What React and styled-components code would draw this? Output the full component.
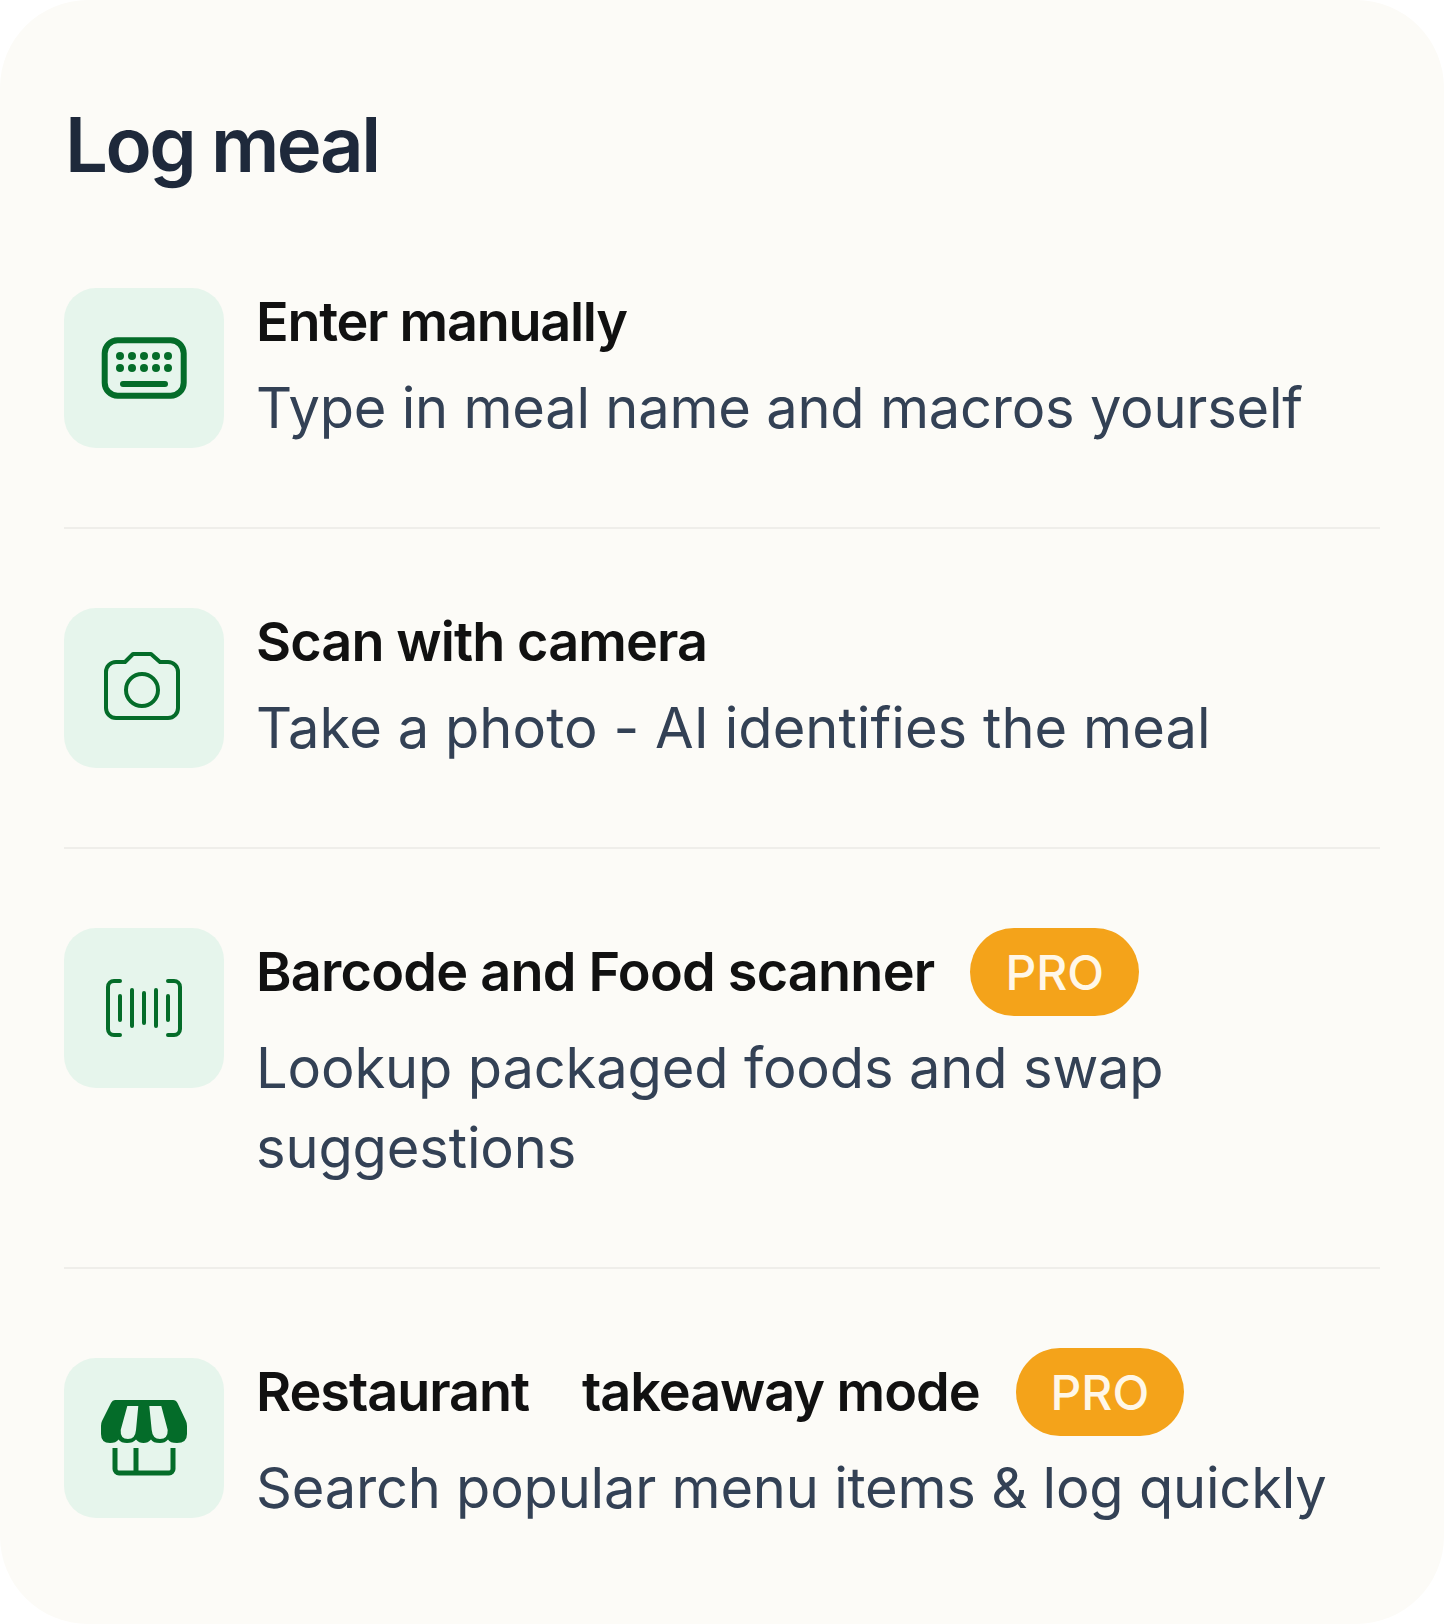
import styled, { createGlobalStyle } from 'styled-components'

const GlobalStyle = createGlobalStyle`
    html, body {
        margin: 0;
        padding: 0;
        background: #ffffff;
    }
    * {
        box-sizing: border-box;
    }
`

const KeyboardIcon = () => (
    <svg viewBox="0 0 96 96" width="96" height="96" fill="none" stroke="#046c29" strokeWidth="6" strokeLinecap="round">
        <rect x="8.7" y="20.3" width="79" height="55.4" rx="13" />
        {[24, 36, 48, 60, 72].map((x) => (
            <g key={x} fill="#046c29" stroke="none">
                <circle cx={x} cy="36" r="4" />
                <circle cx={x} cy="48" r="4" />
            </g>
        ))}
        <path d="M27 64H69" />
    </svg>
)

const CameraIcon = () => (
    <svg viewBox="0 0 96 96" width="96" height="96" fill="none" stroke="#046c29" strokeWidth="4" strokeLinejoin="round">
        <path d="M10 32a10 10 0 0 1 10-10H29L37 14H55L64 22H72a10 10 0 0 1 10 10V68a10 10 0 0 1-10 10H20a10 10 0 0 1-10-10Z" />
        <circle cx="46" cy="50" r="16" />
    </svg>
)

const BarcodeIcon = () => (
    <svg viewBox="0 0 96 96" width="96" height="96" fill="none" stroke="#046c29" strokeWidth="4" strokeLinecap="round">
        <path d="M24 21H18a6 6 0 0 0-6 6V69a6 6 0 0 0 6 6H24" />
        <path d="M72 21H78a6 6 0 0 1 6 6V69a6 6 0 0 1-6 6H72" />
        <path d="M24 36V60M36 30V66M48 33V63M60 30V66M72 36V60" />
    </svg>
)

const StoreIcon = () => (
    <svg viewBox="0 0 96 96" width="96" height="96" fill="none">
        <path
            fill="#046c29"
            fillRule="evenodd"
            d="M19 10H77Q80 10 81.500 13L90 31Q91 33 91 36V44Q91 53 81 53Q74 53 72 49.500Q69 53 64 53Q57 53 55 49.500Q52 53 47.500 53Q43 53 40 49.500Q37 53 31 53Q25 53 22.500 49.500Q20 53 14 53Q5 53 5 44V36Q5 33 6 31L15 13Q16.500 10 19 10ZM31.300 16H42.300L40 40Q39.300 49 32 49Q24 49 24.700 40ZM53.300 16H65.300L71.700 40Q72 49 64 49Q56.500 49 55.700 40Z"
        />
        <path stroke="#046c29" strokeWidth="5" d="M19 58V79a4 4 0 0 0 4 4H73a4 4 0 0 0 4-4V58M40 58V83" />
    </svg>
)

const items = [
    { title: 'Enter manually', titleTracking: -1.27, text: 'Type in meal name and macros yourself', icon: <KeyboardIcon />, tracking: -0.22 },
    { title: 'Scan with camera', titleTracking: -0.9, text: 'Take a photo - AI identifies the meal', icon: <CameraIcon />, tracking: 0.06 },
    { title: 'Barcode and Food scanner', titleTracking: -0.77, text: 'Lookup packaged foods and swap suggestions', icon: <BarcodeIcon />, tracking: -0.14, pro: true, top: true },
    { title: 'Restaurant\u2003takeaway mode', titleTracking: -1.05, text: 'Search popular menu items & log quickly', icon: <StoreIcon />, tracking: -0.21, pro: true },
]

const App = () => {

    return (
        <>
            <GlobalStyle />
            <Card>
                <Heading>Log meal</Heading>
                <List>
                    {items.map((item, i) => (
                        <Row key={item.title} $top={item.top} $last={i === items.length - 1}>
                            <IconBox>{item.icon}</IconBox>
                            <Body>
                                <TitleRow $pro={item.pro}>
                                    <Title $tracking={item.titleTracking}>{item.title}</Title>
                                    {item.pro && <Badge>PRO</Badge>}
                                </TitleRow>
                                <Description $tracking={item.tracking}>{item.text}</Description>
                            </Body>
                        </Row>
                    ))}
                </List>
            </Card>
        </>
    )

}

const Card = styled.div`
    width: 1444px;
    height: 1624px;
    padding: 0 64px;
    background: #fcfbf7;
    border-radius: 88px;
    font-family: 'Inter', 'Liberation Sans', sans-serif;
    overflow: hidden;
`

const Heading = styled.h1`
    margin: 0;
    padding: 94px 0 0 1px;
    height: 288px;
    font-size: 76px;
    line-height: 100px;
    font-weight: 600;
    letter-spacing: -2.5px;
    color: #1e293b;
`

const List = styled.div`
    display: flex;
    flex-direction: column;
`

const Row = styled.div`
    display: flex;
    align-items: ${(p) => (p.$top ? 'flex-start' : 'center')};
    gap: 32px;
    padding-bottom: ${(p) => (p.$last ? '0' : '79px')};
    margin-bottom: ${(p) => (p.$last ? '0' : '79px')};
    border-bottom: ${(p) => (p.$last ? 'none' : '2px solid #efeeea')};
`

const IconBox = styled.div`
    flex: none;
    width: 160px;
    height: 160px;
    display: flex;
    align-items: center;
    justify-content: center;
    background: #e6f5ec;
    border-radius: 32px;
`

const Body = styled.div`
    flex: 1;
    min-width: 0;
    display: flex;
    flex-direction: column;
`

const TitleRow = styled.div`
    display: flex;
    align-items: center;
    gap: 36px;
    height: ${(p) => (p.$pro ? '88px' : '68px')};
    margin-bottom: 12px;
`

const Title = styled.span`
    font-size: 54px;
    line-height: 68px;
    font-weight: 600;
    letter-spacing: ${(p) => p.$tracking}px;
    color: #111111;
    white-space: pre;
`

const Badge = styled.span`
    display: flex;
    align-items: center;
    height: 88px;
    padding: 0 35px;
    border-radius: 44px;
    background: #f4a31a;
    color: #fff7e8;
    font-size: 48px;
    font-weight: 500;
`

const Description = styled.p`
    margin: 0;
    font-size: 56px;
    line-height: 80px;
    font-weight: 400;
    letter-spacing: ${(p) => p.$tracking}px;
    color: #334155;
`

export default App
